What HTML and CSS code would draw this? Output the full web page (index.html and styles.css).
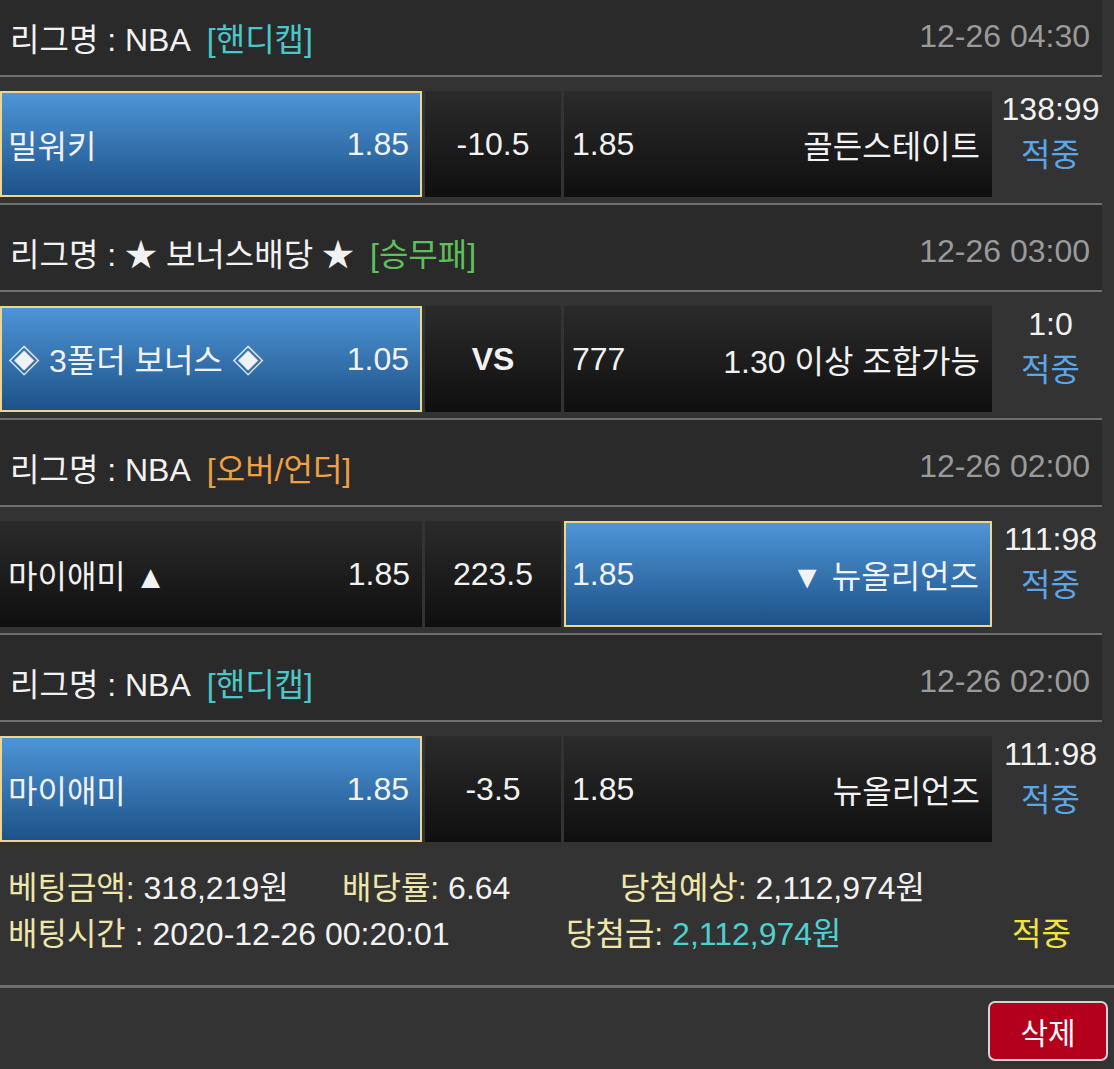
FILE: index.html
```html
<!DOCTYPE html>
<html lang="ko">
<head>
<meta charset="utf-8">
<title>배팅내역</title>
<link rel="stylesheet" href="styles.css">
</head>
<body>
<div class="wrap">
  <section class="game">
    <div class="league"><span class="lname">리그명 : NBA</span><span class="tag cyan">[핸디캡]</span><span class="date">12-26 04:30</span></div>
    <div class="match">
      <div class="cell side sel"><span>밀워키</span><span>1.85</span></div>
      <div class="cell mid">-10.5</div>
      <div class="cell side"><span>1.85</span><span>골든스테이트</span></div>
      <div class="score"><div>138:99</div><div class="hit">적중</div></div>
    </div>
  </section>
  <section class="game">
    <div class="league"><span class="lname">리그명 : ★ 보너스배당 ★</span><span class="tag green">[승무패]</span><span class="date">12-26 03:00</span></div>
    <div class="match">
      <div class="cell side sel"><span>◈ 3폴더 보너스 ◈</span><span>1.05</span></div>
      <div class="cell mid vs">VS</div>
      <div class="cell side"><span>777</span><span>1.30 이상 조합가능</span></div>
      <div class="score"><div>1:0</div><div class="hit">적중</div></div>
    </div>
  </section>
  <section class="game">
    <div class="league"><span class="lname">리그명 : NBA</span><span class="tag orange">[오버/언더]</span><span class="date">12-26 02:00</span></div>
    <div class="match">
      <div class="cell side"><span>마이애미 ▲</span><span>1.85</span></div>
      <div class="cell mid">223.5</div>
      <div class="cell side sel"><span>1.85</span><span>▼ 뉴올리언즈</span></div>
      <div class="score"><div>111:98</div><div class="hit">적중</div></div>
    </div>
  </section>
  <section class="game last">
    <div class="league"><span class="lname">리그명 : NBA</span><span class="tag cyan">[핸디캡]</span><span class="date">12-26 02:00</span></div>
    <div class="match">
      <div class="cell side sel"><span>마이애미</span><span>1.85</span></div>
      <div class="cell mid">-3.5</div>
      <div class="cell side"><span>1.85</span><span>뉴올리언즈</span></div>
      <div class="score"><div>111:98</div><div class="hit">적중</div></div>
    </div>
  </section>
  <section class="summary">
    <div class="sline">
      <span class="c1"><span class="lbl">베팅금액:</span> 318,219원</span>
      <span class="c2"><span class="lbl">배당률:</span> 6.64</span>
      <span class="c3"><span class="lbl">당첨예상:</span> 2,112,974원</span>
    </div>
    <div class="sline">
      <span class="d1"><span class="lbl">배팅시간</span> : 2020-12-26 00:20:01</span>
      <span class="d2"><span class="lbl">당첨금:</span> <span class="win">2,112,974원</span></span>
      <span class="d3">적중</span>
    </div>
  </section>
  <div class="actions">
    <button class="del" type="button">삭제</button>
  </div>
</div>
</body>
</html>
```
FILE: styles.css
```css
html, body {
  margin: 0;
  padding: 0;
  background: #333333;
  overflow: hidden;
}
body {
  font-family: "Liberation Sans", "Noto Sans CJK KR", sans-serif;
  color: #f2f2f2;
  font-size: 32px;
}
.wrap {
  margin-top: -10px;
  width: 1114px;
}
.game {
  width: 1102px;
  border-bottom: 2px solid #6f6f6f;
}
.game.last {
  border-bottom: none;
}
.league {
  height: 87px;
  box-sizing: border-box;
  padding: 8px 12px 0 10px;
  display: flex;
  align-items: center;
  background: #2a2a2a;
  border-bottom: 2px solid #6f6f6f;
}
.tag {
  margin-left: 16px;
}
.cyan { color: #4cc6c9; }
.green { color: #5fc05a; }
.orange { color: #f0a043; }
.date {
  margin-left: auto;
  color: #9a9a9a;
}
.match {
  display: grid;
  grid-template-columns: 422px 136px 428px 1fr;
  grid-template-rows: 106px;
  column-gap: 3px;
  padding: 14px 0 6px;
}
.cell {
  box-sizing: border-box;
  background: linear-gradient(#2b2b2b, #0f0f0f);
  display: flex;
  align-items: center;
}
.side {
  justify-content: space-between;
  padding: 0 12px 0 8px;
}
.sel {
  background: linear-gradient(#4e95d7, #1d5288);
  border: 2px solid #efd58e;
  padding: 0 11px 0 6px;
}
.mid {
  justify-content: center;
}
.vs {
  font-weight: bold;
}
.score {
  margin-top: -5px;
  line-height: 46px;
  text-align: center;
  padding-left: 4px;
}
.hit {
  color: #5aa6e6;
}
.summary {
  padding: 17px 0 28px 8px;
  line-height: 46px;
  border-bottom: 3px solid #6f6f6f;
}
.sline {
  display: flex;
  white-space: nowrap;
}
.lbl { color: #efe7a9; }
.c1 { width: 334px; }
.c2 { width: 278px; }
.d1 { width: 558px; }
.d2 { width: 446px; }
.win { color: #4fd0d0; }
.d3 { color: #f1e43f; }
.actions {
  display: flex;
  justify-content: flex-end;
  padding: 13px 6px 0 0;
}
.del {
  width: 120px;
  height: 60px;
  box-sizing: border-box;
  background: #b2001d;
  border: 2px solid #d4d4d4;
  border-radius: 7px;
  color: #ffffff;
  font-family: "Liberation Sans", "Noto Sans CJK KR", sans-serif;
  font-size: 30px;
  padding: 0;
}
```
